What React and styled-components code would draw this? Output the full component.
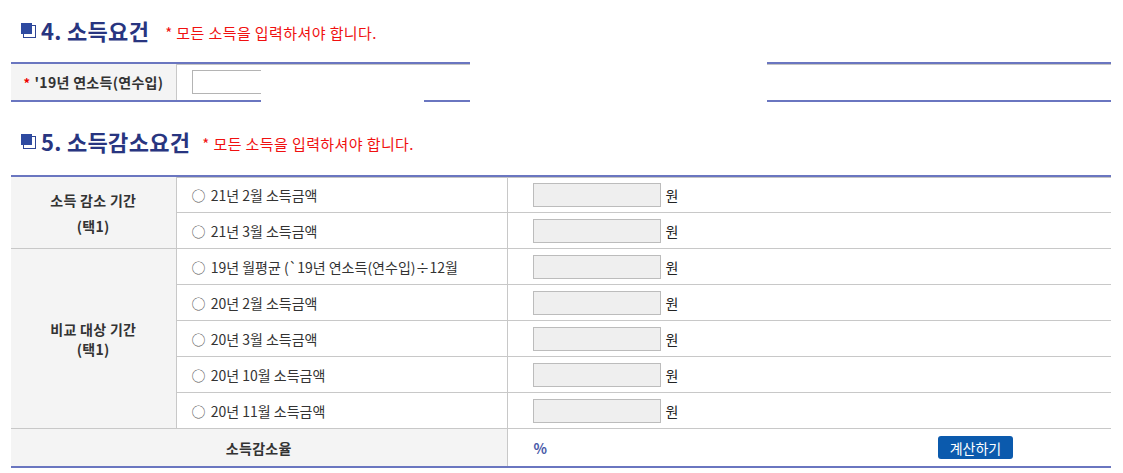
import React from 'react';
import styled, { createGlobalStyle } from 'styled-components';

const GlobalStyle = createGlobalStyle`
  body {
    margin: 0;
    background: #fff;
    font-family: 'Noto Sans CJK KR', 'Noto Sans', sans-serif;
    color: #333;
  }
`;

const Page = styled.div`
  position: relative;
  width: 1123px;
  height: 473px;
  padding: 0 12px 0 11px;
  box-sizing: border-box;
  overflow: hidden;
`;

// 섹션 제목
const Heading = styled.div`
  display: flex;
  align-items: center;
  height: 30px;
  margin-top: ${(p) => p.$top}px;
  padding-left: 10px;
`;

const Bullet = styled.span`
  position: relative;
  width: 15px;
  height: 15px;
  margin-right: 5px;
  flex: none;
  &::before {
    content: '';
    position: absolute;
    left: 2px;
    top: 2px;
    width: 11px;
    height: 11px;
    border: 1px solid #2e4595;
    background: #fff;
  }
  &::after {
    content: '';
    position: absolute;
    left: 0;
    top: 0;
    width: 11px;
    height: 11px;
    background: #2e4aa0;
  }
`;

const Title = styled.h3`
  margin: 0;
  font-size: 22px;
  font-weight: 700;
  color: #283580;
  letter-spacing: 0.3px;
`;

const Note = styled.span`
  margin-left: ${(p) => p.$gap}px;
  margin-top: 4px;
  font-size: 15px;
  letter-spacing: 0.4px;
  color: #f01010;
`;

const Table = styled.table`
  width: 1100px;
  border-collapse: collapse;
  border-top: 2px solid #6a76c0;
  border-bottom: 2px solid #6a76c0;
  box-shadow: inset 0 1px 0 #c4c4c4;
  margin-top: ${(p) => p.$top}px;
  font-size: 14px;
  table-layout: fixed;
`;

const Th = styled.th`
  width: ${(p) => p.$w || 'auto'};
  height: ${(p) => p.$h || 36}px;
  background: #f4f4f4;
  border: 1px solid #c8c8c8;
  border-left: none;
  font-weight: 700;
  color: #333;
  line-height: ${(p) => p.$lh || 20}px;
  text-align: center;
  padding: 0;
  letter-spacing: 0.3px;
`;

const Td = styled.td`
  height: 35px;
  border: 1px solid #c8c8c8;
  border-right: none;
  padding: 0 0 0 ${(p) => p.$pad || 15}px;
  color: #333;
  white-space: nowrap;
`;

const Star = styled.span`
  color: #e00;
  margin-right: 4px;
  font-size: 13px;
`;

const Radio = styled.span`
  color: #555;
  font-size: 14px;
  margin-right: 2px;
`;

const Field = styled.input`
  width: ${(p) => p.$w}px;
  height: 24px;
  box-sizing: border-box;
  border: 1px solid ${(p) => (p.$grey ? '#bcbcbc' : '#b4b4b4')};
  background: ${(p) => (p.$grey ? '#efefef' : '#fff')};
  vertical-align: middle;
  margin: 0;
`;

const Won = styled.span`
  margin-left: 5px;
  color: #222;
  vertical-align: middle;
`;

const ResultCell = styled.div`
  display: flex;
  align-items: center;
`;

const Percent = styled.span`
  color: #4a5aa8;
  font-weight: 700;
  font-size: 14px;
`;

const CalcButton = styled.button`
  margin-left: 391px;
  width: 75px;
  height: 23px;
  border: none;
  border-radius: 3px;
  background: #0b5aad;
  color: #fff;
  font-family: inherit;
  font-size: 14px;
  padding: 0;
  cursor: pointer;
`;

// 위에 덮인 흰색 영역
const Mask = styled.div`
  position: absolute;
  left: ${(p) => p.$x}px;
  top: ${(p) => p.$y}px;
  width: ${(p) => p.$w}px;
  height: ${(p) => p.$h}px;
  background: #fff;
`;

const decreaseRows = ['21년 2월 소득금액', '21년 3월 소득금액'];
const compareRows = [
  "19년 월평균 (`19년 연소득(연수입)÷12월",
  '20년 2월 소득금액',
  '20년 3월 소득금액',
  '20년 10월 소득금액',
  '20년 11월 소득금액',
];

const AmountCell = () => (
  <Td $pad={25}>
    <Field $w={128} $grey readOnly />
    <Won>원</Won>
  </Td>
);

const App = () => (
  <Page>
    <GlobalStyle />
    <Heading $top={15}>
      <Bullet />
      <Title>4. 소득요건</Title>
      <Note $gap={16}>* 모든 소득을 입력하셔야 합니다.</Note>
    </Heading>
    <Table $top={17}>
      <tbody>
        <tr>
          <Th $w="165px" $h={36}>
            <Star>*</Star>'19년 연소득(연수입)
          </Th>
          <Td $pad={15} style={{ borderTop: 'none', borderBottom: 'none' }}>
            <Field $w={140} />
          </Td>
        </tr>
      </tbody>
    </Table>

    <Heading $top={24}>
      <Bullet />
      <Title>5. 소득감소요건</Title>
      <Note $gap={12}>* 모든 소득을 입력하셔야 합니다.</Note>
    </Heading>
    <Table $top={19}>
      <colgroup>
        <col style={{ width: 165 }} />
        <col style={{ width: 331 }} />
        <col />
      </colgroup>
      <tbody>
        {decreaseRows.map((label, i) => (
          <tr key={label}>
            {i === 0 && (
              <Th rowSpan={2} $lh={26}>
                소득 감소 기간
                <br />
                (택1)
              </Th>
            )}
            <Td>
              <Radio>○</Radio> {label}
            </Td>
            <AmountCell />
          </tr>
        ))}
        {compareRows.map((label, i) => (
          <tr key={label}>
            {i === 0 && (
              <Th rowSpan={5} $lh={20}>
                비교 대상 기간
                <br />
                (택1)
              </Th>
            )}
            <Td>
              <Radio>○</Radio> {label}
            </Td>
            <AmountCell />
          </tr>
        ))}
        <tr>
          <Th colSpan={2} $h={37}>
            소득감소율
          </Th>
          <Td $pad={26}>
            <ResultCell>
              <Percent>%</Percent>
              <CalcButton>계산하기</CalcButton>
            </ResultCell>
          </Td>
        </tr>
      </tbody>
    </Table>

    <Mask $x={261} $y={66} $w={163} $h={37} />
    <Mask $x={470} $y={52} $w={297} $h={52} />
  </Page>
);

export default App;
